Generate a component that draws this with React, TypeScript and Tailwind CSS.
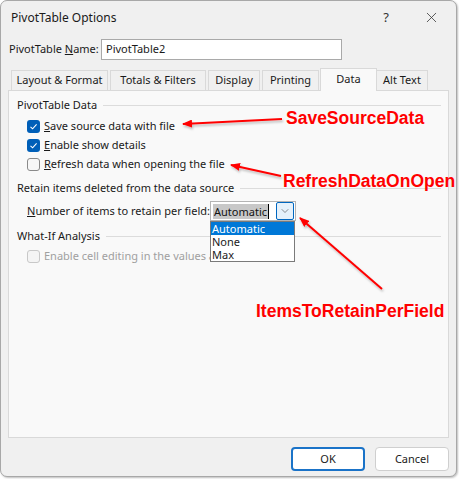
import { X, ChevronDown } from "lucide-react";

const font = { fontFamily: '"Noto Sans", "Open Sans", sans-serif' };
const noteFont = { fontFamily: '"Liberation Sans", Arial, sans-serif' };

const Check = ({ checked, disabled }: { checked?: boolean; disabled?: boolean }) => (
  <span
    className={
      checked
        ? "w-[13px] h-[13px] rounded-[3px] bg-[#005fb8] flex items-center justify-center shrink-0"
        : disabled
        ? "w-[13px] h-[13px] rounded-[3px] border border-[#c8c8c8] bg-[#f4f4f4] shrink-0"
        : "w-[13px] h-[13px] rounded-[3px] border border-[#8a8a8a] bg-[#f7f7f7] shrink-0"
    }
  >
    {checked && (
      <svg width="9" height="9" viewBox="0 0 9 9">
        <path d="M1.5 4.8 L3.6 6.8 L7.6 2.3" stroke="white" strokeWidth="1.1" fill="none" />
      </svg>
    )}
  </span>
);

const Group = ({ title }: { title: string }) => (
  <div className="flex items-center gap-[6px] pl-[8px] pr-[7px] h-[16px]">
    <span className="whitespace-nowrap">{title}</span>
    <div className="flex-1 h-px bg-[#dcdcdc]" />
  </div>
);

export default function App() {
  const tabs = [
    { label: "Layout & Format", w: "w-[97px]" },
    { label: "Totals & Filters", w: "w-[96px]" },
    { label: "Display", w: "w-[52px]" },
    { label: "Printing", w: "w-[57px]" },
  ];

  return (
    <div className="w-[459px] h-[479px] bg-white relative overflow-hidden text-[11px] text-[#1a1a1a]" style={font}>
      <div className="w-[457px] h-[477px] rounded-[7px] border border-[#a8a8a8] bg-[#f0f0f0] shadow-[1px_1px_2px_rgba(0,0,0,0.25)] flex flex-col">
        {/* title bar */}
        <div className="h-[33px] flex items-center pl-[10px] pr-[16px]">
          <span className="text-[12px]">PivotTable Options</span>
          <span className="ml-auto mr-[34px] text-[13px] text-[#333]">?</span>
          <X size={17} strokeWidth={1.1} className="text-[#333]" />
        </div>

        {/* name row */}
        <div className="flex items-center pl-[8px] mt-[5px] gap-[4px]">
          <span className="w-[88px] shrink-0 whitespace-nowrap">
            PivotTable <span className="underline">N</span>ame:
          </span>
          <div className="w-[241px] h-[21px] border border-[#a9a9a9] bg-white flex items-center px-[4px]">
            PivotTable2
          </div>
        </div>

        {/* tabs */}
        <div className="flex items-end pl-[10px] mt-[7px] h-[23px] gap-[2px]">
          {tabs.map((t) => (
            <div
              key={t.label}
              className={`${t.w} h-[20px] border border-b-0 border-[#d9d9d9] bg-[#f0f0f0] flex items-center justify-center whitespace-nowrap`}
            >
              {t.label}
            </div>
          ))}
          <div className="w-[57px] h-[23px] border border-b-0 border-[#d9d9d9] bg-[#f9f9f9] flex items-start pt-[2px] justify-center relative top-px z-10 -ml-px">
            Data
          </div>
          <div className="w-[52px] h-[20px] border border-b-0 border-[#d9d9d9] bg-[#f0f0f0] flex items-center justify-center -ml-[3px] whitespace-nowrap">
            Alt Text
          </div>
        </div>

        {/* panel */}
        <div className="mx-[7px] h-[348px] border border-[#d9d9d9] bg-[#f9f9f9] pt-[6px] flex flex-col">
          <Group title="PivotTable Data" />
          <div className="flex flex-col gap-[6px] pl-[18px] mt-[7px]">
            <div className="flex items-center gap-[4px] h-[13px]">
              <Check checked />
              <span>
                <span className="underline">S</span>ave source data with file
              </span>
            </div>
            <div className="flex items-center gap-[4px] h-[13px]">
              <Check checked />
              <span>
                <span className="underline">E</span>nable show details
              </span>
            </div>
            <div className="flex items-center gap-[4px] h-[13px]">
              <Check />
              <span>
                <span className="underline">R</span>efresh data when opening the file
              </span>
            </div>
          </div>
          <div className="mt-[9px]">
            <Group title="Retain items deleted from the data source" />
          </div>
          <div className="flex items-center pl-[18px] mt-[5px] gap-[4px] relative">
            <span className="w-[179px] shrink-0 whitespace-nowrap">
              <span className="underline">N</span>umber of items to retain per field:
            </span>
            <div className="w-[86px] h-[20px] border border-[#b4b4b4] bg-white flex items-center pl-[2px] pr-px">
              <span className="bg-[#c8c8c8] px-px leading-[15px] text-[#111] border-r border-black">Automatic</span>
              <div className="ml-auto w-[18px] h-[18px] border border-[#0067c0] rounded-[2px] bg-[#e5f1fb] flex items-center justify-center">
                <ChevronDown size={12} strokeWidth={1.2} className="text-[#444]" />
              </div>
            </div>
            {/* open list */}
            <div className="absolute left-[201px] top-[20px] w-[85px] border border-[#7a7a7a] bg-white flex flex-col z-20 leading-[13px]">
              <span className="bg-[#0078d7] text-white px-px">Automatic</span>
              <span className="px-px">None</span>
              <span className="px-px">Max</span>
            </div>
          </div>
          <div className="mt-[7px]">
            <Group title="What-If Analysis" />
          </div>
          <div className="flex items-center gap-[4px] pl-[18px] mt-[6px] h-[13px] text-[#a0a0a0] whitespace-nowrap">
            <Check disabled />
            <span>Enable cell editing in the values area</span>
          </div>
        </div>

        {/* buttons */}
        <div className="flex justify-end gap-[10px] pr-[7px] mt-[9px]">
          <button className="w-[74px] h-[24px] rounded-[4px] border-2 border-[#1a73c8] bg-white">OK</button>
          <button className="w-[74px] h-[24px] rounded-[4px] border border-[#cfcfcf] bg-white">Cancel</button>
        </div>
      </div>

      {/* annotations */}
      <svg className="absolute left-0 top-0 pointer-events-none" width="459" height="479">
        <defs>
          <marker id="ah" markerWidth="10" markerHeight="8" refX="9" refY="4" orient="auto" markerUnits="userSpaceOnUse">
            <path d="M0 0 L10 4 L0 8 Z" fill="#ff0000" />
          </marker>
          <filter id="sh" x="-10%" y="-10%" width="120%" height="130%">
            <feDropShadow dx="1" dy="2" stdDeviation="1" floodColor="#000" floodOpacity="0.25" />
          </filter>
        </defs>
        <g stroke="#ff0000" strokeWidth="2" fill="none" filter="url(#sh)">
          <line x1="282" y1="119" x2="183" y2="124" markerEnd="url(#ah)" />
          <line x1="281" y1="176" x2="231" y2="165" markerEnd="url(#ah)" />
          <line x1="382" y1="289" x2="300" y2="218" markerEnd="url(#ah)" />
        </g>
      </svg>
      <div className="absolute left-[286px] top-[110px] text-[17.5px] font-bold text-[#ff0000] leading-none" style={noteFont}>
        SaveSourceData
      </div>
      <div className="absolute left-[283px] top-[173px] text-[17.5px] font-bold text-[#ff0000] leading-none" style={noteFont}>
        RefreshDataOnOpen
      </div>
      <div className="absolute left-[256px] top-[303px] text-[17.5px] font-bold text-[#ff0000] leading-none" style={noteFont}>
        ItemsToRetainPerField
      </div>
    </div>
  );
}
